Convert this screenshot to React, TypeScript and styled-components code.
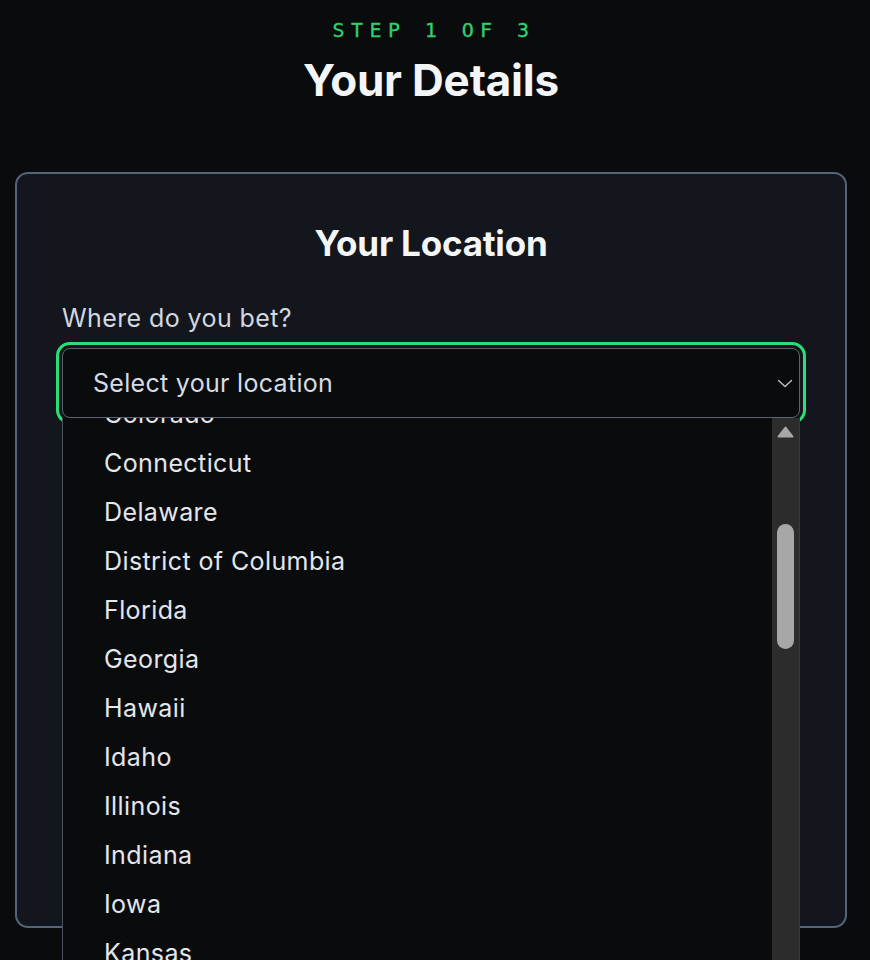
import React, { useLayoutEffect, useRef } from "react";
import styled, { createGlobalStyle } from "styled-components";

const GlobalStyle = createGlobalStyle`
  html, body { margin: 0; padding: 0; background: #0a0b0d; }
  body { font-family: Inter, "Noto Sans", sans-serif; color: #e5e7eb; }
  * { box-sizing: border-box; }
`;

const Page = styled.div`
  width: 862px;
  padding: 18px 15px 32px;
  display: flex;
  flex-direction: column;
  align-items: center;
  background: #0a0b0d;
`;

const Step = styled.div`
  font-family: "DejaVu Sans Mono", "Liberation Mono", monospace;
  font-size: 20px;
  line-height: 24px;
  letter-spacing: 6.4px;
  color: #2ed16e;
  margin-right: -6px;
  -webkit-text-stroke: 0.3px #2ed16e;
`;

const Title = styled.h1`
  margin: 15px 0 0;
  font-size: 44px;
  line-height: 46px;
  font-weight: 700;
  color: #f4f5f7;
  letter-spacing: -0.2px;
`;

const Card = styled.section`
  margin-top: 69px;
  width: 100%;
  min-height: 756px;
  border: 2px solid #56647a;
  border-radius: 13px;
  background: #13161c;
  padding: 49px 45px 40px;
  display: flex;
  flex-direction: column;
`;

const CardTitle = styled.h2`
  margin: 0;
  text-align: center;
  font-size: 35px;
  line-height: 40px;
  font-weight: 700;
  color: #f4f5f7;
  letter-spacing: -0.2px;
`;

const Label = styled.label`
  margin-top: 41px;
  font-size: 25px;
  line-height: 28px;
  letter-spacing: 0.4px;
  color: #d3d8e0;
`;

const Field = styled.div`
  position: relative;
  margin-top: 16px;
`;

const SelectBox = styled.div`
  height: 70px;
  border: 1px solid #5b6372;
  border-radius: 8px;
  background: #0a0b0d;
  outline: 3px solid #2ade78;
  outline-offset: 3px;
  display: flex;
  align-items: center;
  justify-content: space-between;
  padding: 0 5px 0 30px;
  font-size: 25px;
  letter-spacing: 0.3px;
  color: #d6dbe3;
`;

const Chevron = styled.svg`
  width: 18px;
  height: 18px;
  flex: none;
`;

const Dropdown = styled.div`
  position: absolute;
  top: 70px;
  left: 0;
  right: 0;
  height: 560px;
  display: flex;
  background: #0a0b0d;
  border-left: 1px solid #4a505c;
  z-index: 5;
`;

const Viewport = styled.ul`
  flex: 1;
  margin: 0;
  padding: 0;
  list-style: none;
  overflow: hidden;
`;

const Option = styled.li`
  height: 49px;
  display: flex;
  align-items: center;
  padding-left: 41px;
  font-size: 25px;
  letter-spacing: 0.4px;
  color: #e3e6eb;
`;

const Track = styled.div`
  width: 28px;
  flex: none;
  background: #2c2c2c;
  border-right: 1px solid #3a3a3a;
  display: flex;
  flex-direction: column;
  align-items: center;
  padding-top: 8px;
`;

const Arrow = styled.svg`
  width: 17px;
  height: 12px;
  flex: none;
`;

const Thumb = styled.div`
  margin-top: 86px;
  width: 17px;
  height: 125px;
  border-radius: 9px;
  background: #a7a7a7;
`;

const states = [
  "Alabama", "Alaska", "Arizona", "Arkansas", "California", "Colorado",
  "Connecticut", "Delaware", "District of Columbia", "Florida", "Georgia",
  "Hawaii", "Idaho", "Illinois", "Indiana", "Iowa", "Kansas", "Kentucky",
  "Louisiana", "Maine", "Maryland", "Massachusetts", "Michigan", "Minnesota",
  "Mississippi", "Missouri", "Montana",
];

export default function App() {
  const listRef = useRef<HTMLUListElement>(null);
  useLayoutEffect(() => {
    if (listRef.current) listRef.current.scrollTop = 6 * 49 - 20;
  }, []);
  return (
    <>
      <GlobalStyle />
      <Page>
        <Step>STEP 1 OF 3</Step>
        <Title>Your Details</Title>
        <Card>
          <CardTitle>Your Location</CardTitle>
          <Label>Where do you bet?</Label>
          <Field>
            <SelectBox>
              <span>Select your location</span>
              <Chevron viewBox="0 0 18 18" fill="none">
                <path d="M2.5 6.5 L9 12.5 L15.5 6.5" stroke="#c4c8cf" strokeWidth="1.3" strokeLinecap="round" strokeLinejoin="round" />
              </Chevron>
            </SelectBox>
            <Dropdown>
              <Viewport ref={listRef}>
                {states.map((s) => (
                  <Option key={s}>{s}</Option>
                ))}
              </Viewport>
              <Track>
                <Arrow viewBox="0 0 17 12">
                  <path d="M8.5 1.5 L15.5 10.5 H1.5 Z" fill="#a7a7a7" stroke="#a7a7a7" strokeWidth="2" strokeLinejoin="round" />
                </Arrow>
                <Thumb />
              </Track>
            </Dropdown>
          </Field>
        </Card>
      </Page>
    </>
  );
}
